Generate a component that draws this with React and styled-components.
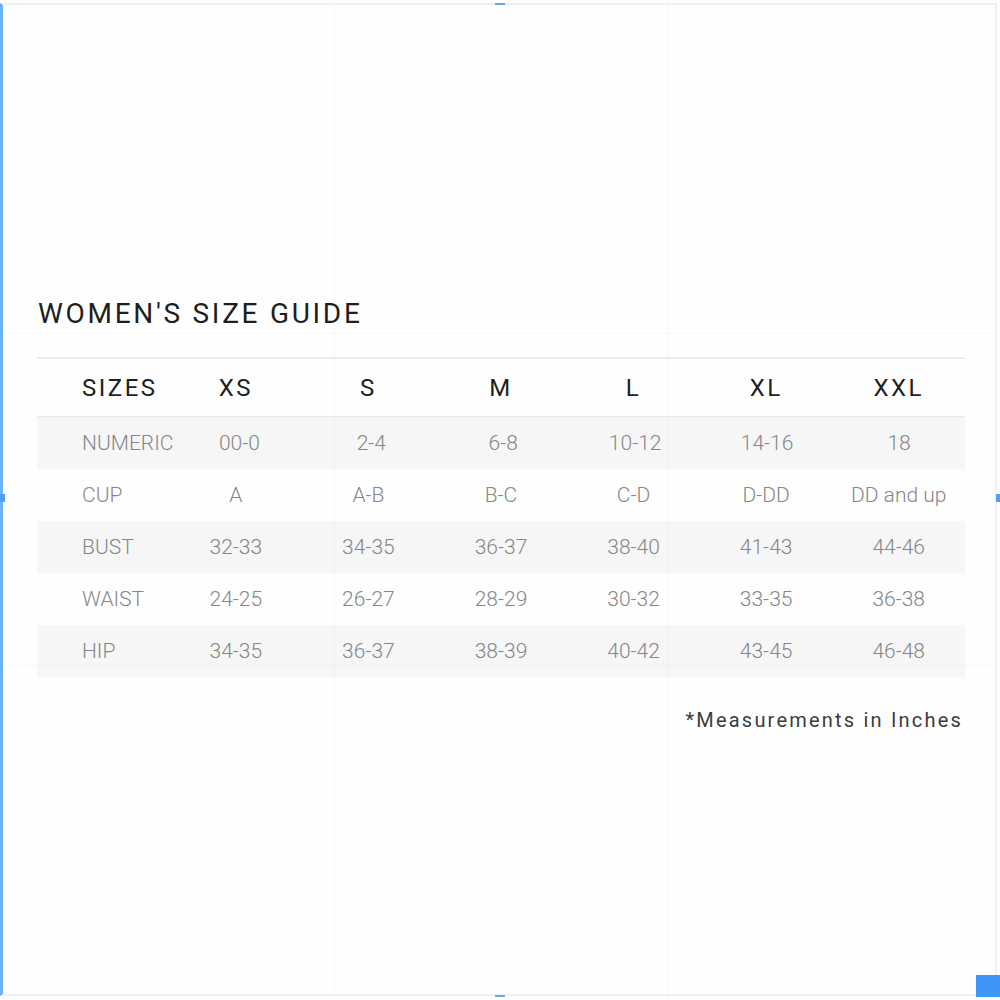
import React from "react";
import styled, { createGlobalStyle } from "styled-components";

const GlobalStyle = createGlobalStyle`
  html, body {
    margin: 0;
    padding: 0;
    background: #ffffff;
  }
  body {
    font-family: Roboto, "Liberation Sans", sans-serif;
  }
`;

const Canvas = styled.div`
  position: relative;
  width: 1000px;
  height: 1000px;
  overflow: hidden;
  background: #fefefe;
  box-sizing: border-box;
  padding: 300px 35px 0 37px;
`;

/* editor chrome drawn over the artboard */
const Frame = styled.div`
  position: absolute;
  inset: 3px 3px 4px 0;
  border-top: 2px solid #ecf0f8;
  border-right: 2px solid #edf1f9;
  border-bottom: 2px solid #edf1f9;
  border-left: 3px solid #6cb2ff;
  pointer-events: none;
`;

const Handle = styled.div`
  position: absolute;
  background: ${(p) => p.color || "#6aa6e0"};
  width: ${(p) => p.w}px;
  height: ${(p) => p.h}px;
  left: ${(p) => p.x}px;
  top: ${(p) => p.y}px;
`;

const Guide = styled.div`
  position: absolute;
  background: rgba(0, 0, 0, 0.022);
  ${(p) =>
    p.vertical
      ? `left: ${p.at}px; top: 0; bottom: 0; width: 1px;`
      : `top: ${p.at}px; left: 0; right: 0; height: 1px;`}
`;

const Title = styled.h1`
  margin: 0 0 29px 1px;
  font-family: Roboto, "Liberation Sans", sans-serif;
  font-weight: 400;
  font-size: 28px;
  line-height: 28px;
  letter-spacing: 2.7px;
  color: #1e1e1e;
`;

const Table = styled.div`
  width: 928px;
  border-top: 2px solid #ebebeb;
`;

const Row = styled.div`
  display: grid;
  grid-template-columns: repeat(7, 1fr);
  align-items: center;
  height: ${(p) => (p.head ? "57px" : "52px")};
  background: ${(p) => (p.shaded ? "#f6f6f6" : "transparent")};
  border-bottom: ${(p) => (p.head ? "1px solid #e9e9e9" : "none")};
`;

const Cell = styled.div`
  text-align: ${(p) => (p.label ? "left" : "center")};
  padding-left: ${(p) => (p.label ? "45px" : "0")};
  font-family: Roboto, "Liberation Sans", sans-serif;
  font-size: ${(p) => (p.head ? "24px" : "21px")};
  font-weight: ${(p) => (p.head ? 400 : 300)};
  letter-spacing: ${(p) => (p.head ? "2.5px" : "0")};
  color: ${(p) => (p.head ? "#1f1f1f" : "#868686")};
  white-space: nowrap;
`;

const Note = styled.p`
  margin: 31px 0 0;
  width: 926px;
  text-align: right;
  font-family: Roboto, "Liberation Sans", sans-serif;
  font-size: 20px;
  font-weight: 400;
  letter-spacing: 2.2px;
  color: #3c3c3c;
`;

const sizes = ["XS", "S", "M", "L", "XL", "XXL"];

const rows = [
  ["NUMERIC", "00-0", "2-4", "6-8", "10-12", "14-16", "18"],
  ["CUP", "A", "A-B", "B-C", "C-D", "D-DD", "DD and up"],
  ["BUST", "32-33", "34-35", "36-37", "38-40", "41-43", "44-46"],
  ["WAIST", "24-25", "26-27", "28-29", "30-32", "33-35", "36-38"],
  ["HIP", "34-35", "36-37", "38-39", "40-42", "43-45", "46-48"],
];

export default function App() {
  return (
    <>
      <GlobalStyle />
      <Canvas>
        <Title>WOMEN'S SIZE GUIDE</Title>

        <Table>
          <Row head>
            <Cell head label>
              SIZES
            </Cell>
            {sizes.map((s) => (
              <Cell head key={s}>
                {s}
              </Cell>
            ))}
          </Row>

          {rows.map(([label, ...values], i) => (
            <Row key={label} shaded={i % 2 === 0}>
              <Cell label>{label}</Cell>
              {values.map((v, j) => (
                <Cell key={j}>{v}</Cell>
              ))}
            </Row>
          ))}
        </Table>

        <Note>*Measurements in Inches</Note>

        <Guide vertical at={334} />
        <Guide vertical at={667} />
        <Guide at={333} />
        <Guide at={665} />

        <Frame />
        <Handle x={495} y={3} w={10} h={2} />
        <Handle x={0} y={494} w={5} h={8} color="#4ea0f5" />
        <Handle x={996} y={494} w={4} h={8} color="#4ea0f5" />
        <Handle x={495} y={995} w={10} h={2} />
        <Handle x={976} y={975} w={24} h={22} color="#3d95f8" />
      </Canvas>
    </>
  );
}
